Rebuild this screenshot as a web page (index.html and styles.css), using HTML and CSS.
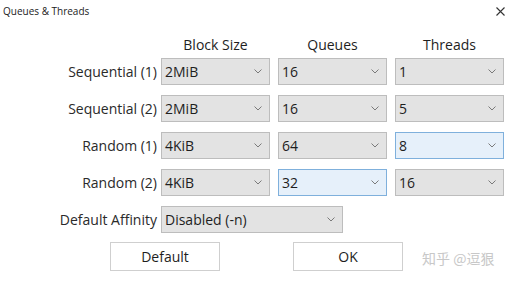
FILE: index.html
```html
<!DOCTYPE html>
<html lang="en">
<head>
    <meta charset="UTF-8">
    <title>Queues &amp; Threads</title>
    <link rel="stylesheet" href="styles.css">
</head>
<body>
    <div class="titlebar">
        <span class="title">Queues &amp; Threads</span>
        <svg class="close" width="9" height="9" viewBox="0 0 9 9"><path d="M0.5 0.5L8.5 8.5M8.5 0.5L0.5 8.5" stroke="#333" stroke-width="1.1"/></svg>
    </div>

    <div class="heads">
        <span></span>
        <span>Block Size</span>
        <span>Queues</span>
        <span>Threads</span>
    </div>

    <div class="grid">
        <span class="label">Sequential (1)</span>
        <div class="combo"><span>2MiB</span><svg width="8" height="5" viewBox="0 0 8 5"><path d="M0.5 0.5L4 4L7.5 0.5" fill="none" stroke="#7a7a7a"/></svg></div>
        <div class="combo"><span>16</span><svg width="8" height="5" viewBox="0 0 8 5"><path d="M0.5 0.5L4 4L7.5 0.5" fill="none" stroke="#7a7a7a"/></svg></div>
        <div class="combo"><span>1</span><svg width="8" height="5" viewBox="0 0 8 5"><path d="M0.5 0.5L4 4L7.5 0.5" fill="none" stroke="#7a7a7a"/></svg></div>

        <span class="label">Sequential (2)</span>
        <div class="combo"><span>2MiB</span><svg width="8" height="5" viewBox="0 0 8 5"><path d="M0.5 0.5L4 4L7.5 0.5" fill="none" stroke="#7a7a7a"/></svg></div>
        <div class="combo"><span>16</span><svg width="8" height="5" viewBox="0 0 8 5"><path d="M0.5 0.5L4 4L7.5 0.5" fill="none" stroke="#7a7a7a"/></svg></div>
        <div class="combo"><span>5</span><svg width="8" height="5" viewBox="0 0 8 5"><path d="M0.5 0.5L4 4L7.5 0.5" fill="none" stroke="#7a7a7a"/></svg></div>

        <span class="label">Random (1)</span>
        <div class="combo"><span>4KiB</span><svg width="8" height="5" viewBox="0 0 8 5"><path d="M0.5 0.5L4 4L7.5 0.5" fill="none" stroke="#7a7a7a"/></svg></div>
        <div class="combo"><span>64</span><svg width="8" height="5" viewBox="0 0 8 5"><path d="M0.5 0.5L4 4L7.5 0.5" fill="none" stroke="#7a7a7a"/></svg></div>
        <div class="combo active"><span>8</span><svg width="8" height="5" viewBox="0 0 8 5"><path d="M0.5 0.5L4 4L7.5 0.5" fill="none" stroke="#7a7a7a"/></svg></div>

        <span class="label">Random (2)</span>
        <div class="combo"><span>4KiB</span><svg width="8" height="5" viewBox="0 0 8 5"><path d="M0.5 0.5L4 4L7.5 0.5" fill="none" stroke="#7a7a7a"/></svg></div>
        <div class="combo active"><span>32</span><svg width="8" height="5" viewBox="0 0 8 5"><path d="M0.5 0.5L4 4L7.5 0.5" fill="none" stroke="#7a7a7a"/></svg></div>
        <div class="combo"><span>16</span><svg width="8" height="5" viewBox="0 0 8 5"><path d="M0.5 0.5L4 4L7.5 0.5" fill="none" stroke="#7a7a7a"/></svg></div>

        <span class="label">Default Affinity</span>
        <div class="combo wide"><span>Disabled (-n)</span><svg width="8" height="5" viewBox="0 0 8 5"><path d="M0.5 0.5L4 4L7.5 0.5" fill="none" stroke="#7a7a7a"/></svg></div>
    </div>

    <div class="buttons">
        <button>Default</button>
        <button>OK</button>
    </div>

    <div class="watermark">知乎 @逗狠</div>
</body>
</html>
```

FILE: styles.css
```css
body {
    margin: 0;
    background: #fff;
    font-family: "Open Sans", "Noto Sans", sans-serif;
    color: #1e1e1e;
    position: relative;
    width: 515px;
    height: 281px;
    overflow: hidden;
}
.titlebar {
    height: 22px;
    display: flex;
    align-items: center;
    justify-content: space-between;
    padding: 0 10px 0 3px;
}
.title {
    font-size: 10px;
    color: #222;
}
.heads,
.grid {
    display: grid;
    grid-template-columns: 153px repeat(3, 109px);
    column-gap: 8px;
}
.heads {
    margin-top: 13px;
    line-height: 20px;
    font-size: 14px;
    text-align: center;
}
.grid {
    margin-top: 3px;
    grid-auto-rows: 27px;
    row-gap: 10px;
    font-size: 14px;
}
.label {
    justify-self: end;
    align-self: center;
    margin-right: -4px;
    color: #2a2a2a;
}
.combo {
    display: flex;
    align-items: center;
    justify-content: space-between;
    box-sizing: border-box;
    border: 1px solid #bdbdbd;
    background: #e3e3e3;
    padding: 0 7px 0 3px;
}
.combo.active {
    border-color: #7fb0dc;
    background: #e6f0fa;
}
.combo.wide {
    grid-column: span 2;
    width: 182px;
}
.buttons {
    display: flex;
    gap: 73px;
    margin: 9px 0 0 110px;
}
button {
    width: 110px;
    height: 29px;
    background: #fff;
    border: 1px solid #cfcfcf;
    font-family: inherit;
    font-size: 14px;
    color: #1e1e1e;
}
.watermark {
    position: absolute;
    left: 422px;
    top: 248px;
    font-family: "Noto Sans CJK SC", sans-serif;
    font-size: 14px;
    color: #c8c8c8;
}
```
